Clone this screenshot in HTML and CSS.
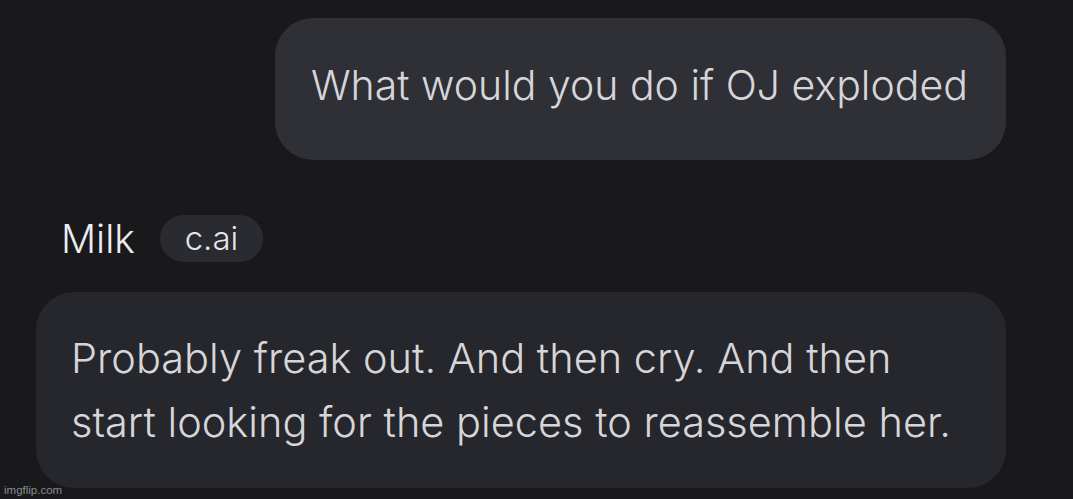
FILE: index.html
```html
<!DOCTYPE html>
<html>
<head>
<meta charset="utf-8">
<link rel="stylesheet" href="styles.css">
</head>
<body>
<div class="chat">
  <div class="row-user">
    <div class="bubble user">What would you do if OJ exploded</div>
  </div>
  <div class="name-row">
    <span class="name">Milk</span>
    <span class="badge">c.ai</span>
  </div>
  <div class="bubble bot">Probably freak out. And then cry. And then<br>start looking for the pieces to reassemble her.</div>
</div>
<div class="watermark">imgflip.com</div>
</body>
</html>
```
FILE: styles.css
```css
html, body {
  margin: 0;
  padding: 0;
  background: #19191c;
  width: 1073px;
  height: 499px;
  overflow: hidden;
  font-family: "Inter", "Noto Sans", sans-serif;
  color: #d6d6da;
}
.chat {
  display: flex;
  flex-direction: column;
  padding-top: 18px;
}
.row-user {
  display: flex;
  justify-content: flex-end;
  padding-right: 67px;
}
.bubble {
  font-weight: 300;
  box-sizing: border-box;
}
.user {
  width: 731px;
  height: 142px;
  background: #2f3036;
  border-radius: 38px;
  padding: 47px 0 0 36px;
  font-size: 41px;
  line-height: 41px;
}
.name-row {
  display: flex;
  align-items: center;
  gap: 25px;
  padding-left: 61px;
  margin-top: 55px;
  height: 47px;
}
.name {
  font-size: 39px;
  font-weight: 300;
  line-height: 47px;
  color: #ececef;
}
.badge {
  display: inline-flex;
  align-items: center;
  justify-content: center;
  width: 103px;
  height: 47px;
  border-radius: 24px;
  background: #2a2b30;
  font-size: 33px;
  font-weight: 300;
  line-height: 47px;
  color: #e6e6ea;
}
.bot {
  margin-top: 30px;
  margin-left: 36px;
  width: 970px;
  height: 196px;
  background: #26272c;
  border-radius: 38px;
  padding: 34px 0 0 35px;
  font-size: 41.5px;
  line-height: 64px;
}
.watermark {
  position: absolute;
  left: 4px;
  bottom: 3px;
  font-family: "Liberation Sans", sans-serif;
  font-size: 11.5px;
  color: #8a8a8e;
}
```
